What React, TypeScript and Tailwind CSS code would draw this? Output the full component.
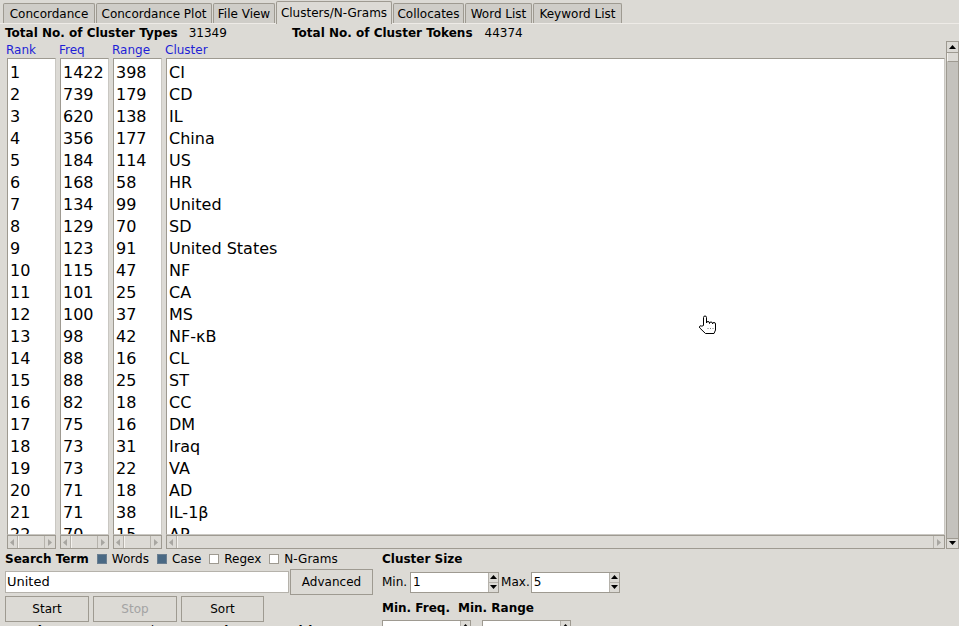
import React from "react";

const rows: [number, number, number, string][] = [
  [1, 1422, 398, "CI"],
  [2, 739, 179, "CD"],
  [3, 620, 138, "IL"],
  [4, 356, 177, "China"],
  [5, 184, 114, "US"],
  [6, 168, 58, "HR"],
  [7, 134, 99, "United"],
  [8, 129, 70, "SD"],
  [9, 123, 91, "United States"],
  [10, 115, 47, "NF"],
  [11, 101, 25, "CA"],
  [12, 100, 37, "MS"],
  [13, 98, 42, "NF-κB"],
  [14, 88, 16, "CL"],
  [15, 88, 25, "ST"],
  [16, 82, 18, "CC"],
  [17, 75, 16, "DM"],
  [18, 73, 31, "Iraq"],
  [19, 73, 22, "VA"],
  [20, 71, 18, "AD"],
  [21, 71, 38, "IL-1β"],
  [22, 70, 15, "AP"],
];

const tabs = [
  { name: "Concordance", w: "w-[92px]" },
  { name: "Concordance Plot", w: "w-[116px]" },
  { name: "File View", w: "w-[62px]" },
  { name: "Clusters/N-Grams", w: "w-[116px]", active: true },
  { name: "Collocates", w: "w-[71px]" },
  { name: "Word List", w: "w-[67px]" },
  { name: "Keyword List", w: "w-[89px]" },
];

function Tri({ dir, color }: { dir: "up" | "down" | "left" | "right"; color: string }) {
  const pts = {
    up: "1,6 4.5,2 8,6",
    down: "1,2 4.5,6 8,2",
    left: "6,1 2,4.5 6,8",
    right: "2,1 6,4.5 2,8",
  }[dir];
  return (
    <svg width="9" height="9" viewBox="0 0 9 9">
      <polygon points={pts} fill={color} />
    </svg>
  );
}

function HScroll() {
  return (
    <div className="h-[14px] flex border border-[#9e9a91] bg-[#c4c2bd]">
      <div className="w-[10px] h-full flex items-center justify-center bg-[#dcdad5] border-r border-[#b5b2ab]">
        <Tri dir="left" color="#a8a6a1" />
      </div>
      <div className="flex-1 h-full bg-[#dcdad5] border-l border-[#f4f2ee] border-r border-r-[#b5b2ab]" />
      <div className="w-[10px] h-full flex items-center justify-center bg-[#dcdad5]">
        <Tri dir="right" color="#a8a6a1" />
      </div>
    </div>
  );
}

function ListCol({ head, items, wide }: { head: string; items: (string | number)[]; wide?: boolean }) {
  return (
    <div className={wide ? "flex-1 flex flex-col min-w-0" : "w-[49px] flex flex-col"}>
      <div className="h-[17px] pt-[1px] leading-[17px] text-[12px] text-[#1f1fd6] -ml-px">{head}</div>
      <div className="flex-1 overflow-hidden bg-white border border-[#9e9a91] border-r-[#c9c7c2] border-b-[#c9c7c2] pt-[3px] pl-[2px]">
        {items.map((v, i) => (
          <div key={i} className="h-[22px] leading-[22px] text-[16px] whitespace-nowrap">
            {v}
          </div>
        ))}
      </div>
      <HScroll />
    </div>
  );
}

function Check({ on, label }: { on?: boolean; label: string }) {
  return (
    <span className="flex items-center ml-[8px]">
      <span
        className={
          on
            ? "w-[10px] h-[10px] bg-[#4a6984] border border-[#6b7f91]"
            : "w-[10px] h-[10px] bg-white border border-[#9e9a91]"
        }
      />
      <span className="ml-[5px]">{label}</span>
    </span>
  );
}

function Btn({ label, w, off }: { label: string; w: string; off?: boolean }) {
  return (
    <div
      className={`${w} h-[26px] flex items-center justify-center border border-[#9e9a91] bg-[#dcdad5] ${
        off ? "text-[#a3a3a3]" : "text-black"
      }`}
    >
      {label}
    </div>
  );
}

function Spin({ value, w }: { value: string; w: string }) {
  return (
    <div className={`${w} h-[21px] flex bg-white border border-[#9e9a91]`}>
      <div className="flex-1 pl-[2px] leading-[19px]">{value}</div>
      <div className="w-[10px] flex flex-col bg-[#dcdad5] border-l border-[#b5b2ab]">
        <div className="flex-1 flex items-center justify-center border-b border-[#b5b2ab]">
          <svg width="7" height="4" viewBox="0 0 7 4">
            <polygon points="0,4 3.5,0 7,4" fill="#000" />
          </svg>
        </div>
        <div className="flex-1 flex items-center justify-center">
          <svg width="7" height="4" viewBox="0 0 7 4">
            <polygon points="0,0 3.5,4 7,0" fill="#000" />
          </svg>
        </div>
      </div>
    </div>
  );
}

export default function App() {
  return (
    <div className="relative w-[959px] h-[626px] overflow-hidden bg-[#dcdad5] text-black text-[12px] font-['DejaVu_Sans',sans-serif]">
      {/* notebook tabs */}
      <div className="h-[24px] flex items-end pl-[3px] gap-[1px] border-b border-[#eeebe7]">
        {tabs.map((t) => (
          <div
            key={t.name}
            className={`${t.w} ${
              t.active ? "h-[23px] bg-[#dcdad5] -mb-px" : "h-[20px] bg-[#cfcdc8]"
            } flex items-center justify-center rounded-t-[2px] border border-b-0 border-[#9e9a91] whitespace-nowrap`}
          >
            {t.name}
          </div>
        ))}
      </div>

      {/* totals */}
      <div className="h-[17px] flex items-center pl-[5px]">
        <span className="w-[287px] flex">
          <b>Total No. of Cluster Types</b>
          <span className="ml-[11px]">31349</span>
        </span>
        <span className="flex">
          <b>Total No. of Cluster Tokens</b>
          <span className="ml-[12px]">44374</span>
        </span>
      </div>

      {/* lists */}
      <div className="h-[508px] flex">
        <div className="flex-1 flex pl-[7px] gap-[4px]">
          <ListCol head="Rank" items={rows.map((r) => r[0])} />
          <ListCol head="Freq" items={rows.map((r) => r[1])} />
          <ListCol head="Range" items={rows.map((r) => r[2])} />
          <ListCol head="Cluster" items={rows.map((r) => r[3])} wide />
        </div>
        <div className="ml-[1px] w-[13px] flex flex-col border border-[#9e9a91] bg-[#c4c2bd]">
          <div className="h-[11px] flex items-center justify-center bg-[#dcdad5] border-b border-[#9e9a91]">
            <Tri dir="up" color="#000" />
          </div>
          <div className="h-[9px] bg-[#dcdad5] border-l border-[#f4f2ee] border-b border-b-[#9e9a91]" />
          <div className="flex-1" />
          <div className="h-[10px] flex items-center justify-center bg-[#dcdad5] border-t border-[#9e9a91]">
            <Tri dir="down" color="#000" />
          </div>
        </div>
      </div>

      {/* controls */}
      <div className="flex">
        <div className="w-[377px] ml-[5px] flex flex-col">
          <div className="h-[20px] flex items-center">
            <b>Search Term</b>
            <Check on label="Words" />
            <Check on label="Case" />
            <Check label="Regex" />
            <Check label="N-Grams" />
          </div>
          <div className="h-[26px] flex items-center">
            <div className="w-[284px] h-[22px] bg-white border border-[#b5b2ab] pl-[1px] text-[13px] leading-[20px]">
              United
            </div>
            <div className="ml-[1px]">
              <Btn label="Advanced" w="w-[83px]" />
            </div>
          </div>
          <div className="h-[26px] mt-[1px] flex gap-[4px]">
            <Btn label="Start" w="w-[84px]" />
            <Btn label="Stop" w="w-[84px]" off />
            <Btn label="Sort" w="w-[83px]" />
          </div>
          <div className="h-[14px] mt-[2px] leading-[14px] flex items-center">
            <b>Sort by</b>
            <span className="ml-[24px] flex items-center">
              <span className="w-[10px] h-[10px] bg-white border border-[#9e9a91]" />
              <span className="ml-[5px]">Invert Order</span>
            </span>
            <b className="ml-[20px]">Search Term Position</b>
          </div>
        </div>
        <div className="flex flex-col">
          <div className="h-[20px] flex items-center">
            <b>Cluster Size</b>
          </div>
          <div className="h-[26px] flex items-center">
            <span>Min.</span>
            <span className="ml-[3px]">
              <Spin value="1" w="w-[89px]" />
            </span>
            <span className="ml-[2px]">Max.</span>
            <span className="ml-[1px]">
              <Spin value="5" w="w-[89px]" />
            </span>
          </div>
          <div className="h-[24px] pt-[1px] flex items-center">
            <b>Min. Freq.</b>
            <b className="ml-[8px]">Min. Range</b>
          </div>
          <div className="flex gap-[11px] mt-[1px]">
            <Spin value="" w="w-[89px]" />
            <Spin value="" w="w-[89px]" />
          </div>
        </div>
      </div>

      {/* pointer over the list */}
      <svg className="absolute left-[697px] top-[315px]" width="22" height="20" viewBox="0 0 22 20">
        <path
          d="M6.5 10.5 V2.5 a1.5 1.5 0 0 1 3 0 V8 a1.5 1.5 0 0 1 3 0 v0.5 a1.5 1.5 0 0 1 3 0 v0.5 a1.5 1.5 0 0 1 3 0 V15 l-1.5 3.5 H8.5 L2.8 13 a1.3 1.3 0 0 1 2 -1.8 z"
          fill="#fff"
          stroke="#000"
          strokeWidth="1"
        />
        <path d="M11 13 v2 M13.5 13 v2 M16 13 v2" stroke="#777" strokeWidth="1" strokeDasharray="1 1" />
      </svg>
    </div>
  );
}
